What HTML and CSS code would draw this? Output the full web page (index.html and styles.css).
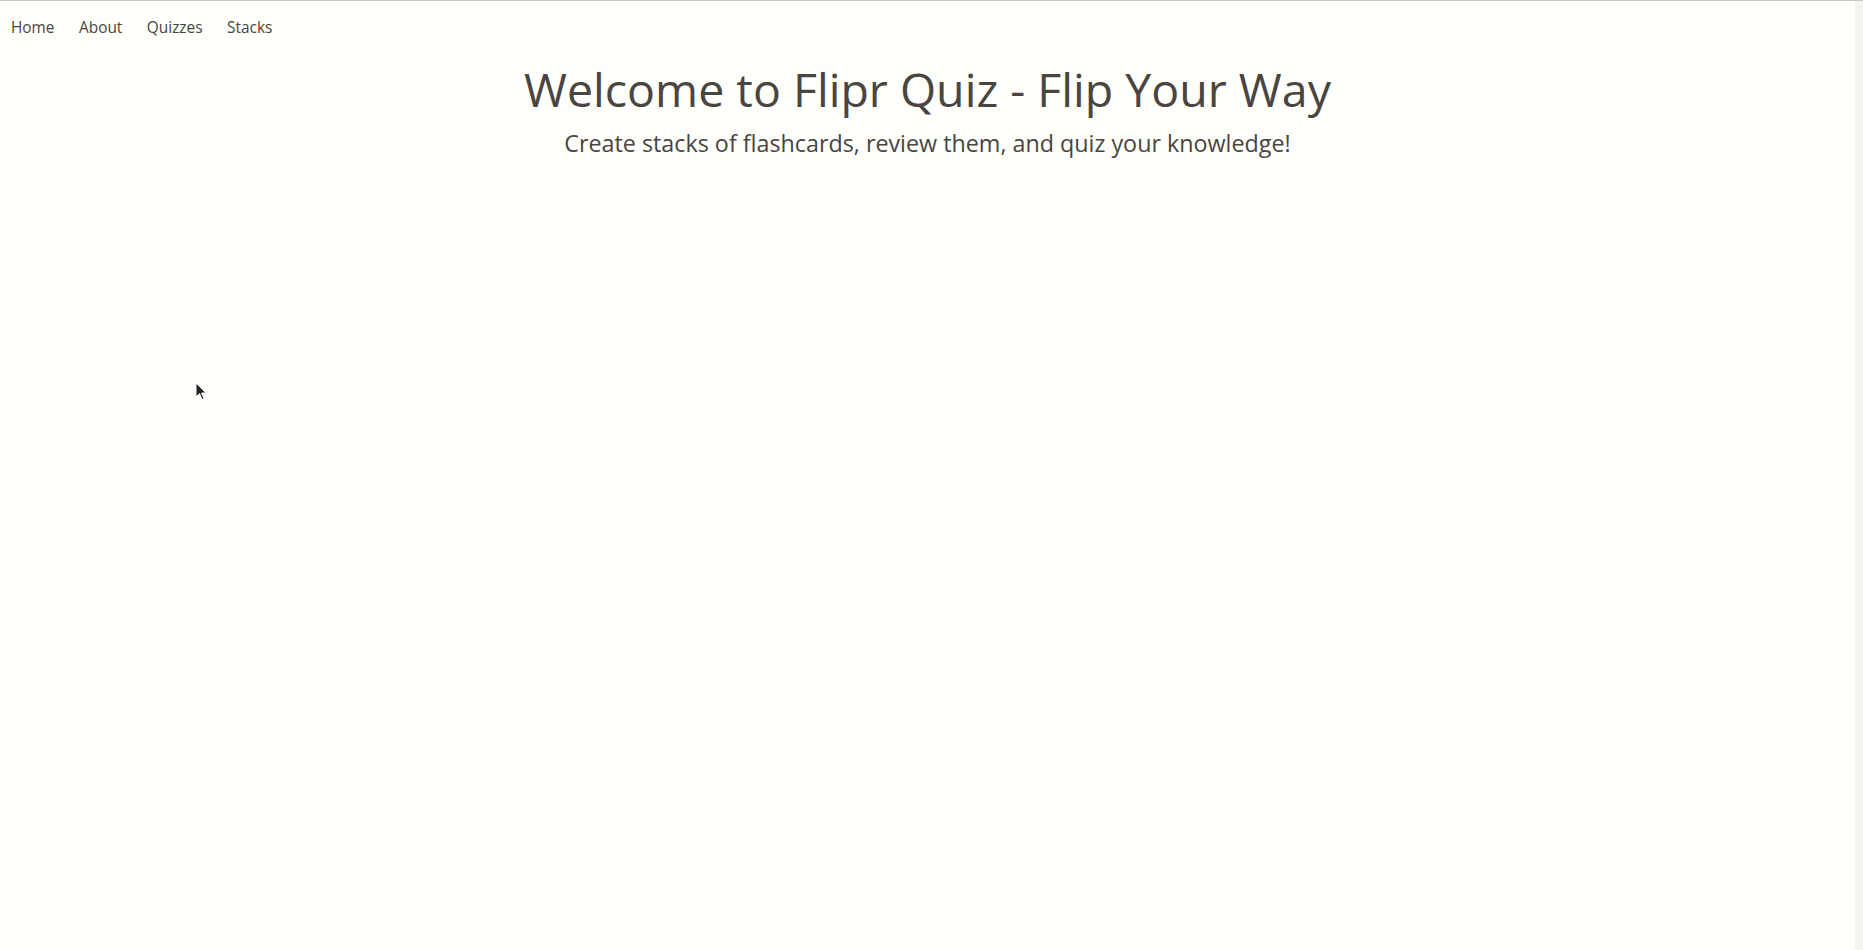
FILE: index.html
```html
<!DOCTYPE html>
<html lang="en">
<head>
<meta charset="utf-8">
<title>Flipr Quiz</title>
<link rel="stylesheet" href="styles.css">
</head>
<body>
<div class="page">
  <div class="content">
    <nav class="nav">
      <a href="#" class="nav-link">Home</a>
      <a href="#" class="nav-link">About</a>
      <a href="#" class="nav-link">Quizzes</a>
      <a href="#" class="nav-link">Stacks</a>
    </nav>
    <main class="hero">
      <h1 class="hero-title">Welcome to Flipr Quiz - Flip Your Way</h1>
      <p class="hero-sub">Create stacks of flashcards, review them, and quiz your knowledge!</p>
    </main>
  </div>
  <div class="scrolltrack"></div>
</div>
<svg class="cursor" width="12" height="19" viewBox="0 0 12 19"><path d="M1 1 L1 15 L4.5 11.5 L7 17.5 L9 16.6 L6.6 11 L11 11 Z" fill="#222" stroke="#fff" stroke-width="1"/></svg>
</body>
</html>
```
FILE: styles.css
```css
* { box-sizing: border-box; }
html, body { margin: 0; padding: 0; height: 100%; }
body {
  background: #fffffb;
  font-family: "Open Sans", "Noto Sans", sans-serif;
  color: #4a4541;
  border-top: 1px solid #c9c9c3;
}
.page { display: flex; height: 100%; }
.content { flex: 1; }
.scrolltrack { width: 8px; background: #f3f3ef; }
.nav { display: flex; gap: 24.5px; padding: 16px 11px 0; }
.nav-link { color: #4a4541; text-decoration: none; font-size: 15.4px; }
.hero { text-align: center; }
.hero-title { font-weight: 400; font-size: 46.5px; margin: 24px 0 0; line-height: 1.2; }
.hero-sub { font-size: 23.3px; margin: 9px 0 0; }
.cursor { position: absolute; left: 195px; top: 382px; }
```
